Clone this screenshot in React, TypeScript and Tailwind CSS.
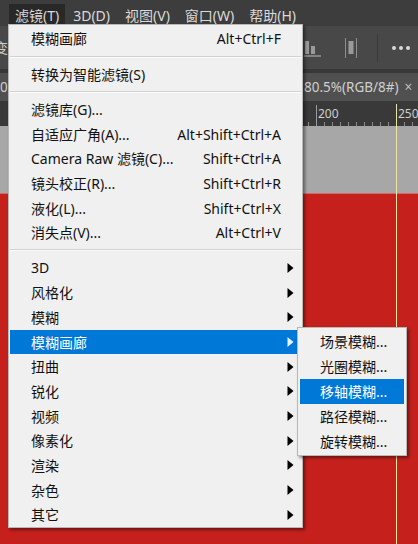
import React from "react";

type Item =
  | { kind: "item"; label: string; shortcut?: string; arrow?: boolean; active?: boolean }
  | { kind: "sep" };

const menu: Item[] = [
  { kind: "item", label: "模糊画廊", shortcut: "Alt+Ctrl+F" },
  { kind: "sep" },
  { kind: "item", label: "转换为智能滤镜(S)" },
  { kind: "sep" },
  { kind: "item", label: "滤镜库(G)..." },
  { kind: "item", label: "自适应广角(A)...", shortcut: "Alt+Shift+Ctrl+A" },
  { kind: "item", label: "Camera Raw 滤镜(C)...", shortcut: "Shift+Ctrl+A" },
  { kind: "item", label: "镜头校正(R)...", shortcut: "Shift+Ctrl+R" },
  { kind: "item", label: "液化(L)...", shortcut: "Shift+Ctrl+X" },
  { kind: "item", label: "消失点(V)...", shortcut: "Alt+Ctrl+V" },
  { kind: "sep" },
  { kind: "item", label: "3D", arrow: true },
  { kind: "item", label: "风格化", arrow: true },
  { kind: "item", label: "模糊", arrow: true },
  { kind: "item", label: "模糊画廊", arrow: true, active: true },
  { kind: "item", label: "扭曲", arrow: true },
  { kind: "item", label: "锐化", arrow: true },
  { kind: "item", label: "视频", arrow: true },
  { kind: "item", label: "像素化", arrow: true },
  { kind: "item", label: "渲染", arrow: true },
  { kind: "item", label: "杂色", arrow: true },
  { kind: "item", label: "其它", arrow: true },
];

const sub = [
  { label: "场景模糊..." },
  { label: "光圈模糊..." },
  { label: "移轴模糊...", active: true },
  { label: "路径模糊..." },
  { label: "旋转模糊..." },
];

function Arrow({ white }: { white?: boolean }) {
  return (
    <svg width="7" height="11" viewBox="0 0 7 11" className="absolute right-[7px] top-1/2 -translate-y-1/2">
      <path d="M0.5 0.5 L6.5 5.5 L0.5 10.5 Z" fill={white ? "#e8f2fc" : "#000"} />
    </svg>
  );
}

function Ruler() {
  const ticks: number[] = [];
  for (let x = 300; x <= 418; x += 8) ticks.push(x);
  return (
    <svg width="418" height="25" className="absolute left-0 top-0">
      {ticks.map((x) => (
        <line key={x} x1={x + 0.5} x2={x + 0.5} y1={21} y2={25} stroke="#8a8a8a" strokeWidth="1" />
      ))}
      <line x1={316.5} x2={316.5} y1={4} y2={25} stroke="#9a9a9a" strokeWidth="1" />
      <line x1={396.5} x2={396.5} y1={4} y2={25} stroke="#9a9a9a" strokeWidth="1" />
      <text x={318} y={17} fill="#cfcfcf" fontSize="12" fontFamily="Noto Sans, sans-serif">200</text>
      <text x={398} y={17} fill="#cfcfcf" fontSize="12" fontFamily="Noto Sans, sans-serif">250</text>
    </svg>
  );
}

export default function App() {
  return (
    <div className="relative w-[418px] h-[544px] overflow-hidden flex flex-col font-['Noto_Sans','Noto_Sans_CJK_SC',sans-serif] text-[14px]">
      {/* Menu bar */}
      <div className="h-[26px] bg-[#3d3d3d] flex items-start pl-[9px] text-[#dadada] shrink-0 whitespace-nowrap">
        <div className="mt-[4px] h-[22px] px-[6px] flex items-center bg-[#282828]">滤镜(T)</div>
        <div className="mt-[4px] h-[22px] px-[8px] flex items-center">3D(D)</div>
        <div className="mt-[4px] h-[22px] px-[7px] flex items-center">视图(V)</div>
        <div className="mt-[4px] h-[22px] px-[8px] flex items-center">窗口(W)</div>
        <div className="mt-[4px] h-[22px] px-[7px] flex items-center">帮助(H)</div>
      </div>

      {/* Options bar */}
      <div className="h-[43px] bg-[#484848] flex items-center shrink-0 text-[#d0d0d0] overflow-hidden">
        <div className="w-[304px] shrink-0 flex">
          <span className="ml-[-6px]">变</span>
        </div>
        <div className="flex items-center">
          <svg width="17" height="20" viewBox="0 0 17 20">
            <rect x="1" y="3" width="4" height="13" fill="#9a9a9a" />
            <rect x="7" y="8" width="4" height="8" fill="#9a9a9a" />
            <rect x="0" y="17.5" width="17" height="1" fill="#bdbdbd" />
          </svg>
          <svg width="13" height="20" viewBox="0 0 13 20" className="ml-[24px]">
            <rect x="0" y="0" width="1" height="20" fill="#8e8e8e" />
            <rect x="11" y="0" width="1" height="20" fill="#8e8e8e" />
            <rect x="3.5" y="3" width="5" height="13" fill="#9a9a9a" />
          </svg>
          <div className="ml-[19px] w-px h-[28px] bg-[#3a3a3a]" />
          <div className="ml-[14px] flex gap-[3px]">
            <div className="w-[4px] h-[4px] rounded-full bg-[#d8d8d8]" />
            <div className="w-[4px] h-[4px] rounded-full bg-[#d8d8d8]" />
            <div className="w-[4px] h-[4px] rounded-full bg-[#d8d8d8]" />
          </div>
        </div>
      </div>

      <div className="h-[4px] bg-[#383838] shrink-0" />

      {/* Tab row */}
      <div className="h-[28px] bg-[#505050] flex items-center shrink-0 text-[#cfcfcf] text-[13.5px] whitespace-nowrap overflow-hidden">
        <div className="w-[304px] shrink-0">
          <span>0,</span>
        </div>
        <span className="shrink-0">80.5%(RGB/8#)</span>
        <span className="ml-[6px] shrink-0 text-[#bdbdbd]">×</span>
      </div>

      {/* Ruler */}
      <div className="relative h-[25px] bg-[#393939] shrink-0">
        <Ruler />
      </div>

      {/* Canvas */}
      <div className="h-[67px] bg-[#a7a7a7] shrink-0" />
      <div className="flex-1 bg-[#c6201d] border-t border-[#d66a66]" />

      {/* Guide */}
      <div className="absolute left-[396px] top-[104px] bottom-0 w-px bg-[#ece4a0]" />

      {/* Dropdown menu */}
      <div className="absolute left-[8px] top-[24px] w-[295px] bg-[#f0f0f0] border border-[#b8b8b8] pt-[1.6px] shadow-[2px_2px_3px_rgba(0,0,0,0.45)] text-[#111]">
        {menu.map((it, i) =>
          it.kind === "sep" ? (
            <div key={i} className="h-[10.5px] mx-[1px] flex flex-col justify-center">
              <div className="h-px bg-[#d2d2d2]" />
              <div className="h-px bg-[#fbfbfb]" />
            </div>
          ) : (
            <div
              key={i}
              className={
                "relative h-[24.7px] mx-[1px] pl-[21px] pr-[20px] flex items-center justify-between whitespace-nowrap " +
                (it.active ? "bg-[#0078d7] text-white" : "")
              }
            >
              <span>{it.label}</span>
              {it.shortcut && <span>{it.shortcut}</span>}
              {it.arrow && <Arrow white={it.active} />}
            </div>
          )
        )}
      </div>

      {/* Submenu */}
      <div className="absolute left-[297px] top-[327px] w-[110px] bg-[#f0f0f0] border border-[#b8b8b8] pt-[1.2px] pb-[1px] shadow-[2px_2px_3px_rgba(0,0,0,0.45)] text-[#111]">
        {sub.map((s, i) => (
          <div
            key={i}
            className={
              "h-[25px] mx-[2px] pl-[20px] flex items-center whitespace-nowrap " +
              (s.active ? "bg-[#0078d7] text-white" : "")
            }
          >
            {s.label}
          </div>
        ))}
      </div>
    </div>
  );
}
